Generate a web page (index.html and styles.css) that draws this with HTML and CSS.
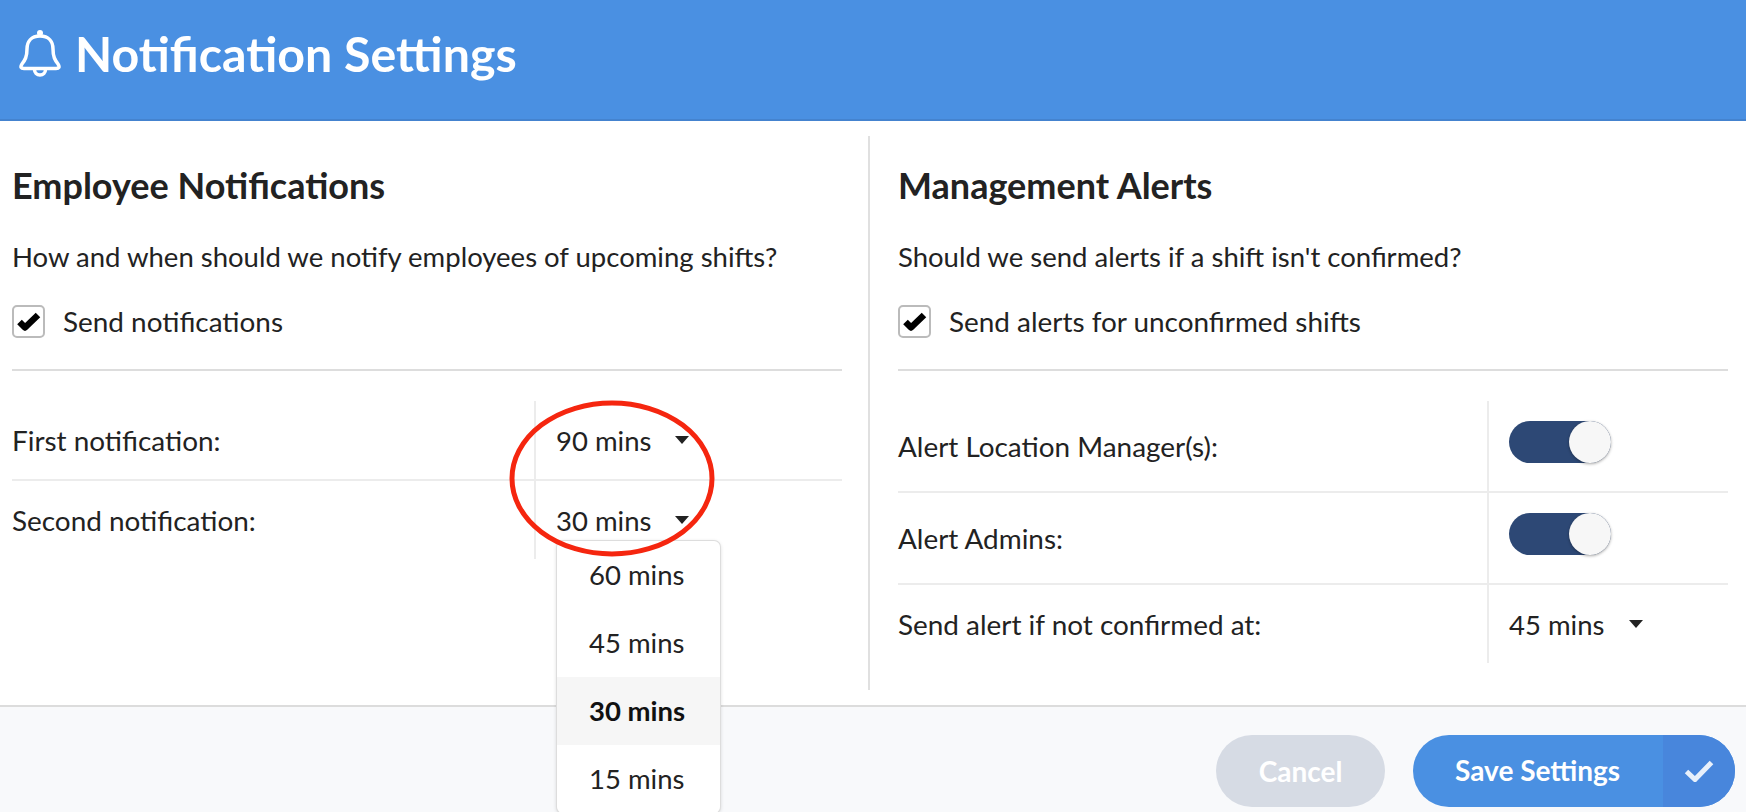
FILE: index.html
```html
<!DOCTYPE html>
<html lang="en">
<head>
<meta charset="utf-8">
<title>Notification Settings</title>
<link rel="stylesheet" href="styles.css">
</head>
<body>
<header class="topbar">
  <svg class="bell" viewBox="0 0 42 47" aria-hidden="true">
    <circle class="bell-knob" cx="21" cy="3" r="3"/>
    <path class="bell-line" d="M21 6C12 6 8 12 8 19C8 27 6 30 3 34C1 37 2 38.500 5 38.500H37C40 38.500 41 37 39 34C36 30 34 27 34 19C34 12 30 6 21 6Z"/>
    <path class="bell-line" d="M15.500 39.500a5.500 5.500 0 0 0 11 0"/>
  </svg>
  <h1 class="title">Notification Settings</h1>
</header>
<main class="panels">
  <section class="col col-left">
    <h2 class="col-title">Employee Notifications</h2>
    <p class="col-text">How and when should we notify employees of upcoming shifts?</p>
    <div class="check-row">
      <span class="checkbox"><svg viewBox="0 0 33 33" aria-hidden="true"><path d="M7.500 17L13 22.500L26 10"/></svg></span>
      <span class="check-label">Send notifications</span>
    </div>
    <div class="table table-left">
      <div class="row row-short">
        <div class="cell-label">First notification:</div>
        <div class="cell-value"><span>90 mins</span><i class="caret"></i></div>
      </div>
      <div class="row row-short">
        <div class="cell-label">Second notification:</div>
        <div class="cell-value cell-open"><span>30 mins</span><i class="caret"></i>
          <ul class="menu">
            <li>60 mins</li>
            <li>45 mins</li>
            <li class="selected">30 mins</li>
            <li>15 mins</li>
          </ul>
        </div>
      </div>
      <svg class="oval" viewBox="0 0 206 157" aria-hidden="true"><ellipse cx="103" cy="78.500" rx="100" ry="75.500"/></svg>
    </div>
  </section>
  <section class="col col-right">
    <h2 class="col-title">Management Alerts</h2>
    <p class="col-text">Should we send alerts if a shift isn't confirmed?</p>
    <div class="check-row">
      <span class="checkbox"><svg viewBox="0 0 33 33" aria-hidden="true"><path d="M7.500 17L13 22.500L26 10"/></svg></span>
      <span class="check-label">Send alerts for unconfirmed shifts</span>
    </div>
    <div class="table table-right">
      <div class="row row-tall">
        <div class="cell-label">Alert Location Manager(s):</div>
        <div class="cell-value"><span class="toggle"><i class="knob"></i></span></div>
      </div>
      <div class="row row-tall">
        <div class="cell-label">Alert Admins:</div>
        <div class="cell-value"><span class="toggle"><i class="knob"></i></span></div>
      </div>
      <div class="row row-last">
        <div class="cell-label">Send alert if not confirmed at:</div>
        <div class="cell-value"><span>45 mins</span><i class="caret"></i></div>
      </div>
    </div>
  </section>
</main>
<footer class="actions">
  <button class="btn btn-cancel" type="button">Cancel</button>
  <button class="btn btn-save" type="button">
    <span class="save-text">Save Settings</span>
    <span class="save-icon"><svg viewBox="0 0 30 22" aria-hidden="true"><path d="M2.500 11.500L11 19.500L27.500 2.500"/></svg></span>
  </button>
</footer>
</body>
</html>
```
FILE: styles.css
```css
* { box-sizing: border-box; }
html, body { margin: 0; padding: 0; }
body {
  width: 1746px;
  height: 812px;
  overflow: hidden;
  background: #fff;
  color: #222;
  font-family: Lato, "Noto Sans", sans-serif;
  display: flex;
  flex-direction: column;
}
.topbar {
  height: 121px;
  flex: none;
  background: #4a90e2;
  border-bottom: 2px solid #4483cf;
  display: flex;
  align-items: flex-start;
  padding: 30px 0 0 19px;
  color: #fff;
}
.bell { width: 42px; height: 47px; flex: none; }
.bell-knob { fill: #fff; }
.bell-line { fill: none; stroke: #fff; stroke-width: 3.5; stroke-linejoin: round; }
.title {
  margin: -5px 0 0 14px;
  font-size: 48.300px;
  line-height: 56px;
  font-weight: 700;
}
.panels {
  height: 584px;
  flex: none;
  display: flex;
  padding: 15px 0;
}
.col { display: flex; flex-direction: column; height: 554px; }
.col-left {
  width: 870px;
  padding: 0 26px 0 12px;
  border-right: 2px solid #e0e0e0;
}
.col-right { width: 876px; padding: 0 18px 0 28px; }
.col-title {
  margin: 28px 0 0;
  font-size: 36px;
  line-height: 42px;
  font-weight: 700;
}
.col-text {
  margin: 34px 0 0;
  font-size: 27.500px;
  line-height: 34px;
}
.check-row {
  margin-top: 31px;
  display: flex;
  align-items: center;
  height: 33px;
}
.checkbox {
  width: 33px;
  height: 33px;
  flex: none;
  border: 2px solid #bbb;
  border-radius: 5px;
  margin-right: 18px;
  display: flex;
}
.checkbox svg { position: relative; left: -2px; top: -2px; width: 33px; height: 33px; flex: none; }
.checkbox path { fill: none; stroke: #000; stroke-width: 6.500; stroke-linejoin: round; }
.check-label { font-size: 27.900px; line-height: 33px; }
.table {
  position: relative;
  margin-top: 31px;
  padding-top: 30px;
  border-top: 2px solid #ddd;
}
.row { display: flex; font-size: 27.500px; border-bottom: 2px solid #ececec; }
.row:last-of-type { border-bottom: 0; }
.row-short { height: 80px; }
.row-short:last-of-type { height: 78px; }
.row-tall { height: 92px; }
.row-last { height: 78px; }
.cell-label { display: flex; align-items: center; font-size: 27.900px; }
.table-left .cell-label { width: 522px; }
.table-right .cell-label { width: 589px; }
.cell-value {
  position: relative;
  flex: 1;
  display: flex;
  align-items: center;
  border-left: 2px solid #ececec;
  padding-left: 20px;
}
.caret {
  width: 0;
  height: 0;
  margin-left: 25px;
  border-left: 7px solid transparent;
  border-right: 7px solid transparent;
  border-top: 8px solid #222;
}
.table-left .caret { margin-left: 24px; }
.toggle {
  position: relative;
  display: block;
  width: 102px;
  height: 42px;
  margin-bottom: 8px;
  border-radius: 21px;
  background: #2d4875;
}
.knob {
  position: absolute;
  right: 0;
  top: 0;
  width: 42px;
  height: 42px;
  border-radius: 50%;
  background: #f7f7f7;
  box-shadow: 0 1px 3px rgba(0, 0, 0, .35);
}
.menu {
  position: absolute;
  left: 21px;
  top: 60px;
  width: 163px;
  margin: 0;
  padding: 0;
  list-style: none;
  background: #fff;
  border-radius: 6px;
  box-shadow: 0 0 0 1px #ddd, 0 1px 4px rgba(0, 0, 0, .2);
  overflow: hidden;
  z-index: 2;
}
.menu li {
  height: 68px;
  line-height: 68px;
  padding-left: 32px;
  font-size: 27.500px;
}
.menu .selected { background: #f6f6f6; color: #111; font-weight: 700; }
.oval {
  position: absolute;
  left: 497px;
  top: 29px;
  width: 206px;
  height: 157px;
  z-index: 3;
}
.oval ellipse { fill: none; stroke: #f5260f; stroke-width: 5; }
.actions {
  flex: 1;
  background: #f8f9fb;
  border-top: 2px solid #dcdcdc;
  display: flex;
  align-items: flex-start;
  justify-content: flex-end;
  padding: 28px 11px 0 0;
  gap: 28px;
}
.btn {
  height: 72px;
  border: 0;
  padding: 0;
  border-radius: 36px;
  color: #fff;
  font-family: Lato, "Noto Sans", sans-serif;
  font-size: 28px;
  font-weight: 700;
}
.btn-cancel { width: 169px; background: #d6dbe4; }
.btn-save {
  width: 322px;
  background: #4a90e2;
  display: flex;
  align-items: stretch;
  overflow: hidden;
}
.save-text { width: 250px; padding-left: 42px; line-height: 70px; text-align: left; }
.save-icon {
  width: 72px;
  background: #4886dc;
  display: flex;
  align-items: center;
  justify-content: center;
}
.save-icon svg { width: 30px; height: 22px; }
.save-icon path { fill: none; stroke: #e8f0fb; stroke-width: 5; }
```
